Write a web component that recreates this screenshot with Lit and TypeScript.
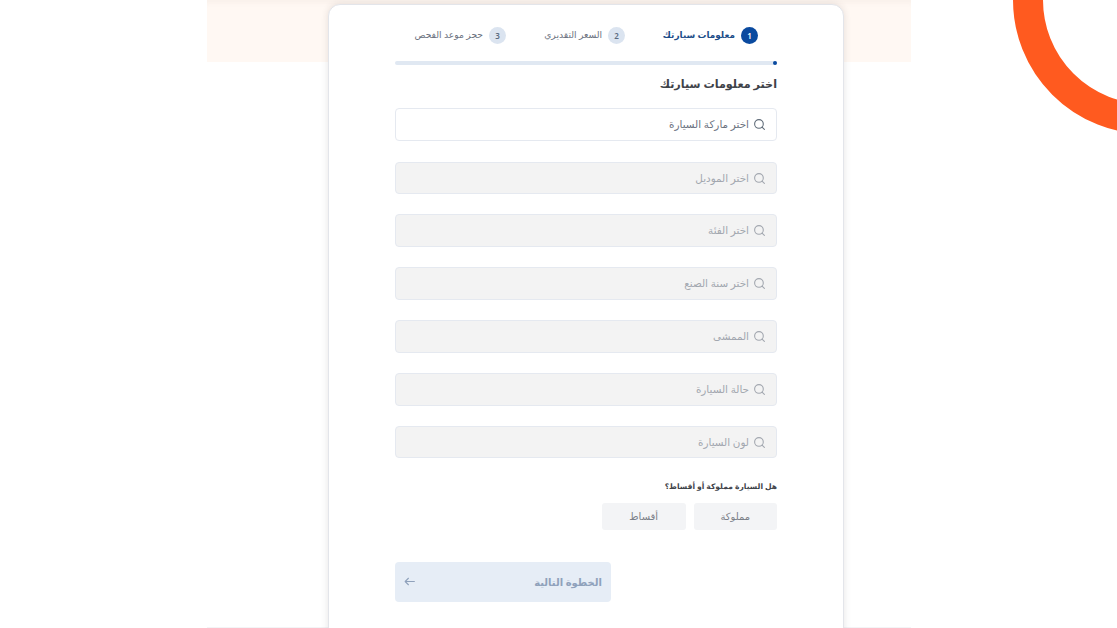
import { LitElement, html, css } from "lit";
import { customElement } from "lit/decorators.js";

const fields = ["اختر ماركة السيارة", "اختر الموديل", "اختر الفئة", "اختر سنة الصنع", "الممشى", "حالة السيارة", "لون السيارة"];
const steps = ["معلومات سيارتك", "السعر التقديري", "حجز موعد الفحص"];

@customElement("app-root")
export class AppRoot extends LitElement {
  static styles = css`
    :host { display: block; position: relative; height: 628px; overflow: hidden; background: #fff;
      font-family: "Noto Sans", "DejaVu Sans", sans-serif; }
    * { box-sizing: border-box; }
    .ring { position: absolute; left: 1013px; top: -134px; width: 268px; height: 268px; border-radius: 50%; border: 30px solid #ff5a1f; }
    .band { position: absolute; left: 207px; top: 0; width: 704px; height: 62px; background: #fff8f3;
      box-shadow: inset 0 7px 6px -5px rgba(90, 60, 30, .05); }
    .rule { position: absolute; left: 207px; bottom: 0; width: 704px; height: 1px; background: #f3f4f6; }
    .page { position: relative; padding: 4px 0 0 328px; }
    .card { direction: rtl; width: 516px; height: 640px; background: #fff; border: 1px solid #e3e5ea; border-radius: 12px;
      box-shadow: 0 0 7px rgba(60, 50, 50, .13); padding: 20px 66px 0; }
    .steps { display: flex; padding-inline-start: 19px; height: 20px; }
    .step { display: flex; align-items: center; gap: 6px; font-size: 9.2px; color: #6b7280; }
    .step span:last-child { padding-bottom: 1px; }
    .step:nth-child(1) { width: 119px; color: #1d4e89; font-weight: 700; font-size: 8.9px; }
    .step:nth-child(2) { width: 119px; margin-inline-start: 14px; }
    .num { flex: none; width: 17px; height: 17px; border-radius: 50%; background: #dbe4f0; color: #5b6b80;
      display: flex; align-items: center; justify-content: center; font-size: 8px; font-weight: 600; }
    .step:nth-child(1) .num { background: #0a4a9f; color: #fff; }
    .bar { position: relative; height: 4px; background: #e0e8f2; border-radius: 2px; margin-top: 16px; }
    .dot { position: absolute; right: 0; top: 0; width: 4px; height: 4px; border-radius: 50%; background: #0a4a9f; }
    h2 { margin: 9px 0 14.3px; font-size: 11.2px; line-height: 20px; font-weight: 700; color: #3f4349; }
    .fields { display: flex; flex-direction: column; gap: 20px; }
    .field { display: flex; align-items: center; gap: 4px; height: 32.8px; padding: 0 10px; border: 1px solid #e5e9f0; border-radius: 4px;
      background: #f3f3f3; font-size: 10.4px; color: #a2a7af; }
    .field span { padding-bottom: 1px; }
    .field svg { color: #a2a7af; }
    .field.on { background: #fff; color: #6b7280; margin-bottom: .6px; }
    .field.on svg { color: #5f6b78; }
    .q { margin: 20.1px 0 0; font-size: 7.6px; line-height: 14px; font-weight: 700; color: #3f4349; }
    .opts { display: flex; gap: 8px; margin-top: 10px; }
    .opt { width: 83.5px; height: 27px; border-radius: 3px; background: #f3f4f6; display: flex; align-items: center; justify-content: center;
      font-size: 10px; color: #7b8088; }
    .next { display: flex; align-items: center; justify-content: space-between; width: 216px; height: 40px; margin: 32px 166px 0 0; padding: 0 9px 0 8px;
      border-radius: 4px; background: #e6edf6; color: #8fa1bb; font-size: 10px; font-weight: 700; }
  `;

  private search() {
    return html`<svg width="13" height="13" viewBox="0 0 24 24" fill="none" stroke="currentColor" stroke-width="2" stroke-linecap="round"><circle cx="11" cy="11" r="8"></circle><path d="M21 21l-4.3-4.3"></path></svg>`;
  }

  render() {
    return html`
      <div class="band"></div>
      <div class="rule"></div>
      <div class="ring"></div>
      <div class="page">
        <div class="card">
          <div class="steps">
            ${steps.map((s, i) => html`<div class="step"><span class="num">${i + 1}</span><span>${s}</span></div>`)}
          </div>
          <div class="bar"><span class="dot"></span></div>
          <h2>اختر معلومات سيارتك</h2>
          <div class="fields">
            ${fields.map((f, i) => html`<div class="field ${i === 0 ? "on" : ""}">${this.search()}<span>${f}</span></div>`)}
          </div>
          <p class="q">هل السيارة مملوكة أو أقساط؟</p>
          <div class="opts"><div class="opt">مملوكة</div><div class="opt">أقساط</div></div>
          <div class="next"><span>الخطوة التالية</span>
            <svg width="13" height="13" viewBox="0 0 24 24" fill="none" stroke="currentColor" stroke-width="2" stroke-linecap="round" stroke-linejoin="round"><path d="M21 12H4M10 6l-6 6 6 6"></path></svg>
          </div>
        </div>
      </div>
    `;
  }
}
